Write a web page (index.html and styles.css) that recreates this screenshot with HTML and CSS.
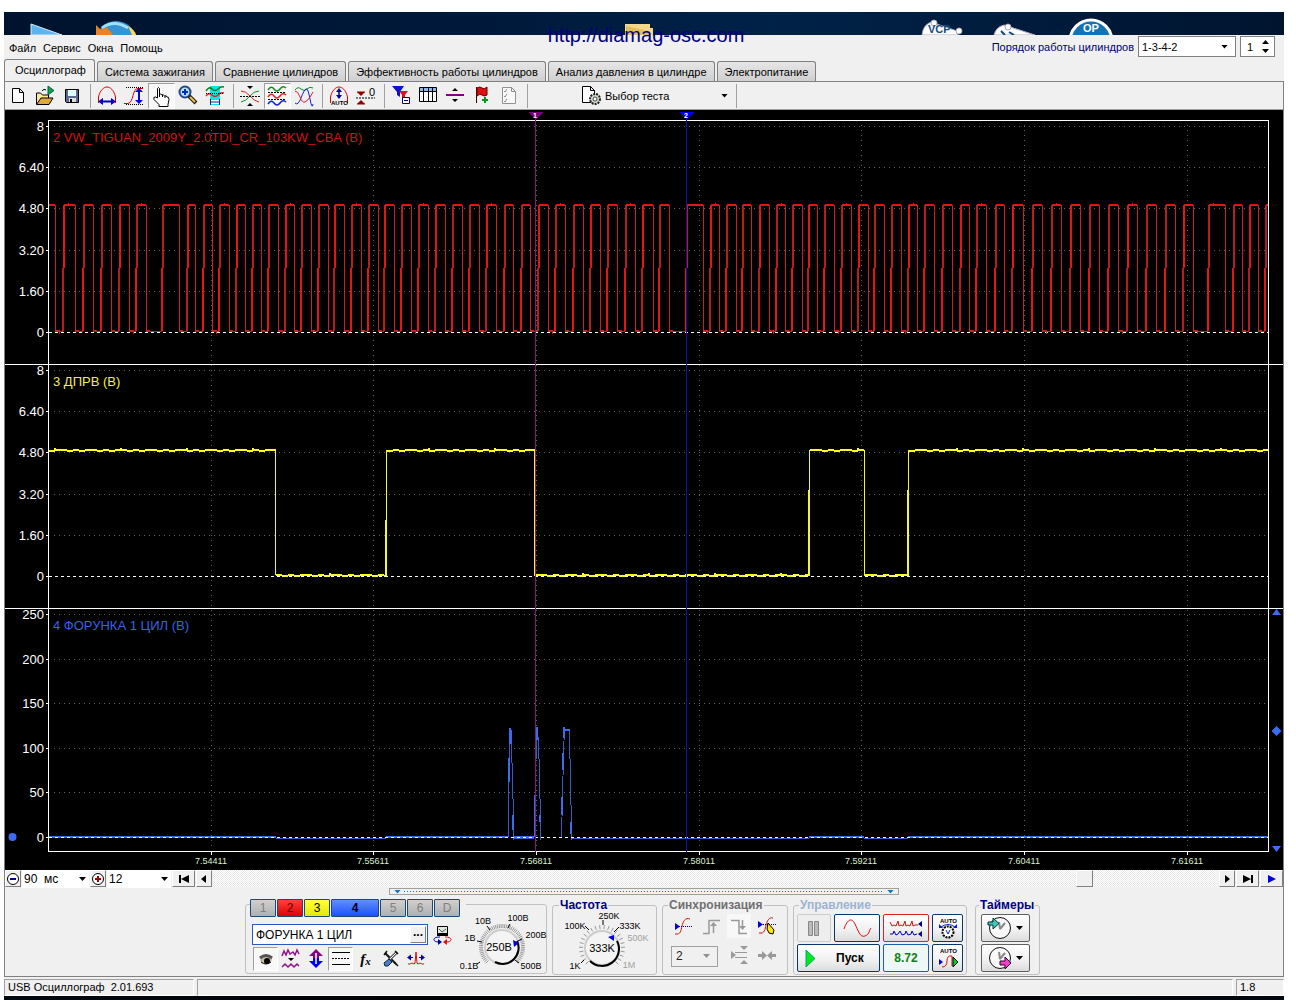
FILE: index.html
```html
<!DOCTYPE html>
<html lang="ru">
<head>
<meta charset="utf-8">
<title>USB Осциллограф</title>
<link rel="stylesheet" href="styles.css">
</head>
<body>
<div class="window">
  <div class="desktop" aria-hidden="true">
    <svg width="86" height="23" viewBox="0 0 86 23">
      <path d="M27 12 58 23H27Z" fill="#5cb4f0" stroke="#d8ecf8"/>
    </svg>
    <svg width="60" height="23" viewBox="86 0 60 23">
      <circle cx="112" cy="29" r="20" fill="#3494d4"/>
      <path d="M98 16q12-9 26 0" fill="none" stroke="#9fe0fa" stroke-width="3"/>
      <path d="M92 23V13l5 5 5-3 4 4 3 4Z" fill="#f08020"/>
      <path d="M124 14q7 4 8 9h-4Z" fill="#ffd860"/>
    </svg>
    <svg class="folder" width="40" height="23" viewBox="0 0 40 23">
      <path d="M5 12h25v4h3v7H5Z" fill="#f2d888"/><path d="M6 14l22 5v4H6Z" fill="#e6bd5c"/>
    </svg>
    <svg class="shortcuts" width="210" height="23" viewBox="0 0 210 23">
      <path d="M14 23q1-10 9-13l26 9 1 4Z" fill="#fff" stroke="#aab" />
      <circle cx="26" cy="11" r="3" fill="#fff" stroke="#aab"/><circle cx="51" cy="19" r="3" fill="#fff" stroke="#aab"/>
      <text x="20" y="21" class="shortcut-text">VCP</text>
      <path d="M86 23q2-8 10-10l31 10Z" fill="#fff" stroke="#aab"/>
      <circle cx="100" cy="15" r="3" fill="#fff" stroke="#aab"/>
      <path d="M93 19l4 4m4-3 5 3" stroke="#124a80" stroke-width="2"/>
      <circle cx="183" cy="29" r="21" fill="#1572b4" stroke="#fff" stroke-width="3"/>
      <text x="175" y="20" class="shortcut-text big">ОР</text>
    </svg>
  </div>
  <header class="menubar">
    <nav class="menu"><a href="#">Файл</a><a href="#">Сервис</a><a href="#">Окна</a><a href="#">Помощь</a></nav>
    <span class="watermark">http://diamag-osc.com</span>
    <div class="order">
      <label for="order">Порядок работы цилиндров</label>
      <span class="combo framed order-combo"><select id="order"><option>1-3-4-2</option></select></span>
      <span class="spin"><input id="first" aria-label="Первый цилиндр" value="1">
        <svg width="9" height="13" viewBox="0 0 9 13"><path d="M1 4h7L4.500 0ZM1 9h7L4.500 13Z"/></svg></span>
    </div>
  </header>
  <div class="tabs" role="tablist">
    <button role="tab" class="tab active" aria-selected="true">Осциллограф</button>
    <button role="tab" class="tab">Система зажигания</button>
    <button role="tab" class="tab">Сравнение цилиндров</button>
    <button role="tab" class="tab">Эффективность работы цилиндров</button>
    <button role="tab" class="tab">Анализ давления в цилиндре</button>
    <button role="tab" class="tab">Электропитание</button>
  </div>
  <main class="page">
    <div class="toolbar">
      <button aria-label="Новый"><svg viewBox="0 0 22 22"><path d="M5.500 3.500h7l4 4v10h-11ZM12.500 3.500v4h4" fill="#fff" stroke="#000"/></svg></button>
      <button aria-label="Открыть"><svg viewBox="0 0 22 22"><path d="M2.500 19V8h4l2 2h6v3" fill="#ffe89a" stroke="#000"/><path d="M2.500 19.500 7 13h12l-4 6.500Z" fill="#e0a83c" stroke="#000"/><path d="M14 1v9l6-4.500Z" fill="#13a04a" stroke="#064"/><path d="M8 6q2-3 4-1" fill="none" stroke="#000"/></svg></button>
      <button aria-label="Сохранить"><svg viewBox="0 0 22 22"><path d="M4.500 4.500h13v13h-12l-1-1Z" fill="#5a6a8c" stroke="#000"/><path d="M7 5h8v6H7Z" fill="#dff"/><path d="M8 13h7v4H8Z" fill="#ddd"/><path d="M9 14h2v3H9Z" fill="#000"/></svg></button>
      <i class="sep"></i>
      <button aria-label="Масштаб по времени"><svg viewBox="0 0 22 22"><path d="M2.500 18V12C4 5 8 2 11 2s7 3 8.500 10v6" fill="none" stroke="#e00000"/><path d="M5 16.500h12" stroke="#0000c0" stroke-width="2"/><path d="M2 16.500 7 13v7ZM20 16.500 15 13v7Z" fill="#0000c0"/></svg></button>
      <button aria-label="Масштаб по амплитуде"><svg viewBox="0 0 22 22"><path d="M1 18.500h4c6-1 4-15 10-15h5" fill="none" stroke="#e00000"/><path d="M3 2.500h17M3 19.500h17" stroke="#000" stroke-dasharray="1 1"/><path d="M16 6v11" stroke="#0000e0" stroke-width="2"/><path d="M16 3l-4 4h8ZM16 19l-4-4h8Z" fill="#0000e0"/></svg></button>
      <button class="pressed" aria-label="Рука"><svg viewBox="0 0 22 22"><path d="M7.500 13V3.500q1-2 2 0V10q1-2 2.500 0 1-1.500 2.500 1 2-1 2.500 1 2-.5 2 2.500l-1 5v2H9v-2l-5-5q-1-3 1.500-2.500Z" fill="#fff" stroke="#000"/><path d="M9.500 10v2m3-2v2m2.500-1v2" stroke="#000"/></svg></button>
      <button aria-label="Лупа"><svg viewBox="0 0 22 22"><circle cx="8" cy="7" r="5.500" fill="#b8dcff" stroke="#234a80" stroke-width="2"/><path d="M5 7h6M8 4v6" stroke="#0030c0" stroke-width="2"/><path d="m12 11 7 7" stroke="#222" stroke-width="4"/><path d="m13 12 5 5" stroke="#f0c040" stroke-width="2"/></svg></button>
      <button aria-label="Выделение"><svg viewBox="0 0 22 22"><path d="M6 1h10v19H6Z" fill="#00e8e8"/><path d="M2 6q3-5 6-2t6 0 6-2" fill="none" stroke="#088020" stroke-width="1.500"/><path d="M2 11q3-4 6-1t6 0 6-2" fill="none" stroke="#e02020" stroke-width="1.500"/><path d="M2 8.500h18" stroke="#000" stroke-dasharray="1 1"/><path d="M7 15h8v4H7Z" fill="#fff"/><path d="M7 17h8M6.500 14v6m9-6v6" stroke="#0020a0"/></svg></button>
      <i class="sep"></i>
      <button aria-label="Совместить"><svg viewBox="0 0 22 22"><path d="M2 6q5 0 9 5t9 6" fill="none" stroke="#e02020"/><path d="M2 17q5-1 9-6t9-5" fill="none" stroke="#089020"/><path d="M1 11.500h20" stroke="#000" stroke-dasharray="2 1"/><path d="M8 1h6l-3 3ZM8 21h6l-3-3Z"/></svg></button>
      <button class="pressed" aria-label="Разделить"><svg viewBox="0 0 22 22"><path d="M2 5q3-5 6-1t6 0 6-1" fill="none" stroke="#089020" stroke-width="1.500"/><path d="M2 12q3-5 6-1t6 0 6-1" fill="none" stroke="#e02020" stroke-width="1.500"/><path d="M2 19q3-5 6-1t6 0 6-1" fill="none" stroke="#1020d0" stroke-width="1.500"/><path d="M2 7.500h18M2 14.500h18" stroke="#000" stroke-dasharray="2 1"/></svg></button>
      <button aria-label="Наложить"><svg viewBox="0 0 22 22"><path d="M2 5q3-4 6-1t6 0 6-1" fill="none" stroke="#089020"/><path d="M2 18q3 3 6-5T13 4t4 10 3 5" fill="none" stroke="#1020d0"/><path d="M2 6q3 0 5 6t5 5 8-10" fill="none" stroke="#e02020"/></svg></button>
      <i class="sep"></i>
      <button aria-label="Автомасштаб"><svg viewBox="0 0 22 22"><path d="M2.500 18V12C4 5 8 2 11 2s7 3 8.500 10v6" fill="none" stroke="#e00000"/><path d="M11 4v9" stroke="#0000a0" stroke-width="1.500"/><path d="M11 3 8 7h6ZM11 14 8 10h6Z" fill="#0000a0"/><text x="3" y="20" class="tiny">AUTO</text></svg></button>
      <button aria-label="Установить ноль"><svg viewBox="0 0 22 22"><path d="M2 7h8l-4 4ZM2 19h8l-4-4Z" fill="#900000"/><path d="M1 13h19" stroke="#000" stroke-dasharray="2 1"/><path d="M2 7h8M2 19h8" stroke="#900000"/><text x="14" y="11" class="zero">0</text></svg></button>
      <i class="sep"></i>
      <button aria-label="Фильтр"><svg viewBox="0 0 22 22"><path d="M2 1h12L10 7v5L7 10V7Z" fill="#1010d0"/><path d="M9 6h9l-3 4v5l-3-2v-3Z" fill="#e01020"/><path d="M12.500 12.500h7v6h-7Z" fill="#fff" stroke="#000080"/><path d="M14 15.500h4" stroke="#000080"/></svg></button>
      <button aria-label="Таблица"><svg viewBox="0 0 22 22"><path d="M2.500 2.500h17v14h-17Z" fill="#fff" stroke="#000"/><path d="M3 3h16v3H3Z" fill="#8ab8e8"/><path d="M2 6.500h18M6.500 3v14M11.500 3v14M15.500 3v14" stroke="#000"/></svg></button>
      <button aria-label="Линейка"><svg viewBox="0 0 22 22"><path d="M2 10h18" stroke="#800080" stroke-width="2"/><path d="M8 6h6l-3-3ZM8 14h6l-3 3Z"/></svg></button>
      <button aria-label="Добавить метку"><svg viewBox="0 0 22 22"><path d="M5.500 2v16" stroke="#400"/><path d="M6 3q3-2 5 0t5-1v8q-3 2-5 0t-5 1Z" fill="#e01010" stroke="#600"/><path d="M11 15h6M14 12v6" stroke="#089020" stroke-width="2"/></svg></button>
      <button aria-label="Список" disabled><svg viewBox="0 0 22 22"><path d="M4.500 2.500h9l4 4v12h-13ZM13.500 2.500v4h4" fill="#f8f8f8" stroke="#909090"/><path d="m6 6 1 1 2-3m-3 7 1 1 2-3m-3 7 1 1 2-3" fill="none" stroke="#909090"/></svg></button>
      <i class="sep"></i>
      <button class="test"><svg viewBox="0 0 22 22"><path d="M2.500 1.500h8l4 4v12h-12ZM10.500 1.500v4h4" fill="#fff" stroke="#000"/><circle cx="15" cy="14" r="5" fill="#cdd8cd" stroke="#222" stroke-width="2" stroke-dasharray="2 1"/><circle cx="15" cy="14" r="2" fill="#fff" stroke="#444"/></svg><span>Выбор теста</span><i class="arrow"></i></button>
      <i class="sep"></i>
    </div>
    <svg class="scope" id="scope" viewBox="5 110 1278 760" role="img" aria-label="Осциллограмма">
      <g id="grid" class="grid"></g>
      <g class="zero-line"><path d="M49 332.500H1268M49 576.500H1268"/></g>
      <g id="traces"></g>
      <path class="zero-line" d="M49 837.500H1268"/>
      <path class="frame" d="M48.500 120.500H1268.500V851.500H48.500ZM5 364.500H1283M5 608.500H1283"/>
      <path class="cursor one" d="M535.500 118V852"/><path class="one-fill" d="M528 112h15l-7 7Z"/><text class="flag" x="535" y="118">1</text>
      <path class="cursor two" d="M686.500 118V852"/><path class="two-fill" d="M679 112h15l-7 7Z"/><text class="flag" x="686" y="118">2</text>
      <g class="handles"><circle cx="12.500" cy="837" r="4"/><path d="M1272 615h9l-4.500-6ZM1272 846h9l-4.500 6ZM1276.500 726l5 5-5 5-5-5Z"/></g>
      <text class="name red" x="53" y="142">2 VW_TIGUAN_2009Y_2.0TDI_CR_103KW_CBA (В)</text>
      <text class="name yellow" x="53" y="386">3 ДПРВ (В)</text>
      <text class="name blue" x="53" y="630">4 ФОРУНКА 1 ЦИЛ (В)</text>
    </svg>
    <div class="scrollrow">
      <button class="raised zoomer" aria-label="Уменьшить"><svg viewBox="0 0 14 14"><circle cx="7" cy="7" r="5.500"/><path d="M4 7h6" stroke="#000090" stroke-width="2"/></svg></button>
      <span class="combo span"><select aria-label="Развёртка"><option>90&nbsp; мс</option></select></span>
      <button class="raised zoomer" aria-label="Увеличить"><svg viewBox="0 0 14 14"><circle cx="7" cy="7" r="5.500"/><path d="M4 7h6M7 4v6" stroke="#a00000" stroke-width="2"/></svg></button>
      <span class="combo span"><select aria-label="Масштаб"><option>12</option></select></span>
      <button class="raised wide" aria-label="В начало"><svg viewBox="0 0 14 14"><path d="M2 3h2v8H2ZM12 3v8L4 7Z"/></svg></button>
      <button class="raised" aria-label="Назад"><svg viewBox="0 0 14 14"><path d="M9 3v8L4 7Z"/></svg></button>
      <input class="track" type="range" min="0" max="1000" value="873" aria-label="Прокрутка">
      <button class="raised" aria-label="Вперёд"><svg viewBox="0 0 14 14"><path d="M5 3v8l5-4Z"/></svg></button>
      <button class="raised wide" aria-label="В конец"><svg viewBox="0 0 14 14"><path d="M10 3h2v8h-2ZM2 3v8l8-4Z"/></svg></button>
      <button class="raised wide" aria-label="Воспроизвести"><svg viewBox="0 0 14 14"><path d="M3 3v8l8-4Z" fill="#0000e0"/></svg></button>
    </div>
    <div class="controls">
      <div class="splitter"><i></i><b></b><i></i></div>
      <div class="groups">
        <div class="group channel">
          <div class="channel-main">
            <div class="channels">
              <button class="ch">1</button><button class="ch c2">2</button><button class="ch c3">3</button><button class="ch c4">4</button><button class="ch">5</button><button class="ch">6</button><button class="ch">D</button>
            </div>
            <div class="name-row">
              <span class="name-box"><input aria-label="Имя канала" value="ФОРУНКА 1 ЦИЛ"><button class="raised" aria-label="Ещё">...</button></span>
              <button class="flat" aria-label="Сброс"><svg viewBox="0 0 20 20"><path d="M5.500 1.500h10v9h-10Z" fill="#dfeadf" stroke="#000"/><path d="M5 8h11v3H5Z"/><path d="m7 4 3 3 4-3" fill="none" stroke="#555"/><path d="M8 12q-6 0-6 2.500t5 2.500" fill="none" stroke="#0000a0"/><path d="M13 12q6 0 6 2.500t-5 2.500" fill="none" stroke="#e01010"/><path d="m6 14 4 3-4 3Z" fill="#0000a0"/><path d="m15 14-4 3 4 3Z" fill="#e01010"/></svg></button>
            </div>
            <div class="icons">
              <button class="pressed" aria-label="Видимость"><svg viewBox="0 0 22 22"><path d="M5 12q6-7 12-1l-1 3q-5 4-10 0Z" fill="#c8b8a0"/><path d="M5 10q6-5 12 0" fill="none" stroke="#555" stroke-width="3"/><circle cx="12" cy="13" r="3"/><path d="M6 14q5 4 10 0" fill="none" stroke="#000"/></svg></button>
              <button aria-label="Сглаживание"><svg viewBox="0 0 22 22"><path d="m2 8 2-5 2 4 2-5 2 4 3-2 2 3 2-5 2 4M2 19l3-3 3 3 3-3 3 3 3-3 2 2" fill="none" stroke="#90108c" stroke-width="1.500"/><path d="M8 10h6l-3 3Z"/></svg></button>
              <button aria-label="Сдвиг"><svg viewBox="0 0 22 22"><path d="m11 1 7 7h-4v4H8V8H4Z" fill="#800880"/><path d="m11 20-7-7h4v-3h6v3h4Z" fill="#0000f0"/><path d="M11 5v11" stroke="#fff" stroke-width="1.500"/></svg></button>
              <button class="pressed" aria-label="Уровни"><svg viewBox="0 0 22 22"><path d="M2 4.500h18M2 16.500h18" stroke="#000"/><path d="M2 10.500h18" stroke="#000" stroke-dasharray="2 1"/></svg></button>
              <button class="fx" aria-label="Функция">f<small>x</small></button>
              <button aria-label="Настройки"><svg viewBox="0 0 22 22"><path d="m5 5 11 11" stroke="#111" stroke-width="2"/><path d="m17 4-8 8" stroke="#555" stroke-width="3"/><path d="m17 4-8 8" stroke="#fff"/><path d="m9 11-5 4 1 3 3 0 4-4Z" fill="#4a80c0" stroke="#124"/><path d="m15 15 3 3M4 7l3-4M15 3l3 3" stroke="#111" stroke-width="1.500"/></svg></button>
              <button aria-label="Сжатие"><svg viewBox="0 0 22 22"><path d="M3 16h2l2-1 2 1 1-1 1-11 1 11 1 1 2-1 2 1h2" fill="none" stroke="#e01010"/><path d="M3 9.500h5M14 9.500h5" stroke="#0000a0"/><path d="m2 9.500 4-3v6ZM20 9.500l-4-3v6Z" fill="#0000a0"/></svg></button>
            </div>
          </div>
          <svg class="knob" width="90" height="68" viewBox="0 0 90 68" data-cx="42" data-cy="42" data-ticks="55" data-inner="18">
            <g class="ticks"></g><circle class="dial" cx="42" cy="42" r="17"/>
            <path class="shade" d="M57 36A16 16 0 0 1 35 57"/>
            <path class="major" d="m22 37-5-1m13-11-3-4m21 2 2-4m8 17 4-2m-42 23-3 2m38-4 4 3"/>
            <path class="pointer" d="m53 35 6 3-5 4Z"/>
            <text x="23" y="19">10В</text><text x="58" y="16">100В</text><text x="10" y="36">1В</text><text x="76" y="33">200В</text><text x="9" y="64">0.1В</text><text x="71" y="64">500В</text>
            <text class="value" x="39" y="46">250В</text>
          </svg>
        </div>
        <fieldset class="group freq"><legend>Частота</legend>
          <svg class="knob" width="103" height="61" viewBox="0 4 103 61" data-cx="49" data-cy="41" data-ticks="23" data-inner="18">
            <g class="ticks"></g><circle class="dial" cx="49" cy="41" r="17"/>
            <path class="shade" d="M64 34A17 17 0 0 1 37 54"/>
            <path class="major" d="m36 23-4-4m18-1v-5m11 12 5-5m-35 33-3 3"/>
            <path class="pointer" d="m55 30 6-2v6Z"/>
            <text x="56" y="12">250K</text><text x="22" y="22">100K</text><text x="77" y="22">333K</text><text class="off" x="85" y="34">500K</text><text x="22" y="62">1K</text><text class="off" x="76" y="61">1M</text>
            <text class="value" x="49" y="45">333K</text>
          </svg>
        </fieldset>
        <fieldset class="group sync"><legend>Синхронизация</legend>
          <button aria-label="Уровень"><svg viewBox="0 0 22 22"><path d="M3 19c6 1 6-4 7-8s3-9 8-7" fill="none" stroke="#d01010"/><path d="M3 11.500h17" stroke="#000080" stroke-dasharray="1 1"/><path d="M3 8v7l5-3.500Z" fill="#0000d0"/></svg></button>
          <button aria-label="Фронт" disabled><svg viewBox="0 0 22 22"><path d="M3 18.500h6v-13h11M13.500 18V9" fill="none" stroke="#999" stroke-width="1.500"/><path d="M10 11h7l-3.500-4Z" fill="#999"/></svg></button>
          <button aria-label="Спад" disabled class="pressed"><svg viewBox="0 0 22 22"><path d="M3 5.500h8v13h8M14.500 5v8" fill="none" stroke="#999" stroke-width="1.500"/><path d="M11 11h7l-3.500 4Z" fill="#999"/></svg></button>
          <button aria-label="Выбор уровня"><svg viewBox="0 0 22 22"><path d="M3 18c6 1 6-4 7-8s3-8 7-7" fill="none" stroke="#d01010"/><path d="M3 9.500h17" stroke="#000080" stroke-dasharray="1 1"/><path d="M2 6v7l5-3.500Z" fill="#0000d0"/><path d="m12 8 6 7-1 4-4-1-2-4Z" fill="#ffe800" stroke="#000"/></svg></button>
          <span class="combo framed disabled"><select aria-label="Канал синхронизации" disabled><option>2</option></select></span>
          <button aria-label="Гистерезис" disabled><svg viewBox="0 0 22 22"><path d="M3 6v8l5-4ZM12 1h8l-4 4ZM12 19h8l-4-4Z" fill="#999"/><path d="M7 7.500h12M7 12.500h12" stroke="#999"/></svg></button>
          <button aria-label="Центр" disabled><svg viewBox="0 0 22 22"><path d="M2 9h4V6l5 4.500L6 15v-3H2ZM20 9h-4V6l-5 4.500 5 4.500v-3h4Z" fill="#999"/></svg></button>
        </fieldset>
        <fieldset class="group run"><legend>Управление</legend>
          <button class="push idle" aria-label="Пауза" disabled><svg viewBox="0 0 24 24"><path d="M6.500 5.500h4v14h-4ZM12.500 5.500h4v14h-4Z" fill="#bbb" stroke="#888"/></svg></button>
          <button class="push" aria-label="Синус"><svg class="w" viewBox="0 0 40 24"><path d="M7 13C11 2 15 2 18 8s5 14 10 12 4-6 6-8" fill="none" stroke="#d01010"/></svg></button>
          <button class="push hot" aria-label="Два луча"><svg class="w" viewBox="0 0 40 24"><path d="m4 6 2 4 2-1 2 1 2-5 1 5 2-1 2 1 2-5 1 5 2-1 2 1 2-5 1 5 2-1 3 0" fill="none" stroke="#d01010"/><path d="m4 18 3 0 1-3 2 4 2-1 2-3 2 4 3-1 1-3 2 4 3-1 1-3 2 4 3-1" fill="none" stroke="#0000c0"/><path d="M36 5v6l-4-3ZM36 15v6l-4-3Z" fill="#000080"/></svg></button>
          <button class="push" aria-label="Авто шкала"><svg viewBox="0 0 24 24"><text x="4" y="7" class="tiny">AUTO</text><circle cx="12" cy="16" r="5.500" fill="#fff" stroke="#000" stroke-width="2" stroke-dasharray="2 1"/><path d="m10 14 2 4 2-4" fill="none" stroke="#0020d0"/><path d="M5 11q7-5 14 0" fill="none" stroke="#0020d0"/><path d="M3 8v4h4ZM21 8v4h-4Z" fill="#0020d0"/></svg></button>
          <button class="push start"><svg viewBox="0 0 24 24"><path d="M8 4v17l9-8.500Z" fill="#00e820" stroke="#0a6"/></svg>Пуск</button>
          <button class="push rate">8.72</button>
          <button class="push" aria-label="Авто пуск"><svg viewBox="0 0 24 24"><text x="4" y="7" class="tiny">AUTO</text><path d="M6 21q5 0 5-6t5-5v10" fill="none" stroke="#d01010"/><path d="M3 13v6l4-3Z" fill="#0000e0"/><path d="M17 11v10l5-5Z" fill="#00d020" stroke="#000"/></svg></button>
        </fieldset>
        <fieldset class="group timers"><legend>Таймеры</legend>
          <button class="push gray" aria-label="Таймер пуска"><svg viewBox="0 0 24 24"><circle cx="13" cy="12" r="10.500" fill="#f8f8f8" stroke="#111"/><path d="m13 13 5-6m-5 6-1-7" stroke="#888" stroke-width="2"/><path d="M1 6h5V2l6 5.500L6 13V9H1Z" fill="#40c8b8" stroke="#033"/></svg><i class="arrow"></i></button>
          <button class="push gray" aria-label="Таймер остановки"><svg viewBox="0 0 24 24"><circle cx="13" cy="12" r="10.500" fill="#f8f8f8" stroke="#111"/><path d="m13 13 5-6m-5 6-1-7" stroke="#888" stroke-width="2"/><path d="M13 15h5v-4l6 6-6 6v-4h-5Z" fill="#f040c8" stroke="#303"/></svg><i class="arrow"></i></button>
        </fieldset>
      </div>
    </div>
  </main>
  <footer class="status"><span class="cell version">USB Осциллограф&nbsp; 2.01.693</span><span class="cell fill"></span><span class="cell last">1.8</span></footer>
  <div class="taskbar"></div>
</div>
<script src="scope.js"></script>
</body>
</html>
```
FILE: styles.css
```css
* { box-sizing: border-box; }
body { margin: 0; background: #fff; font: 11px/14px "Liberation Sans", Arial, sans-serif; color: #000; }
button, input, select { font: inherit; color: inherit; margin: 0; padding: 0; border: 0; background: none; border-radius: 0; outline: 0; }
button { display: flex; align-items: center; justify-content: center; }
select { appearance: none; width: 100%; }
svg { display: block; flex: none; }
.window { position: relative; margin: 12px 12px 0 4px; background: #f0f0f0; }

.desktop { display: flex; height: 23px; overflow: hidden; background: linear-gradient(90deg, #00132e, #001a3c 40%, #002248 60%, #00142f); }
.desktop .folder { margin-left: 470px; }
.desktop .shortcuts { margin-left: auto; margin-right: 166px; }
.shortcut-text { font: bold 11px "Liberation Sans", sans-serif; fill: #124a80; }
.shortcut-text.big { fill: #fff; }

.menubar { display: flex; justify-content: space-between; height: 24px; }
.menu { display: flex; gap: 7px; padding: 6px 5px; }
.menu a { color: #000; text-decoration: none; }
.watermark { position: absolute; top: 12px; left: 4px; right: 0; width: max-content; margin: 0 auto; font-size: 20px; line-height: 23px; color: #000080; }
.order { display: flex; gap: 4px; padding: 1px 9px 0 0; }
.order label { color: #000070; line-height: 23px; }
.combo { display: grid; grid-template-columns: 1fr 8px; align-items: center; padding-right: 6px; background: #fff; }
.combo::after, .arrow { content: ""; width: 7px; height: 4px; background: #000; clip-path: polygon(0 0, 100% 0, 50% 100%); }
.framed { border: 1px solid #808080; }
.order-combo { width: 98px; height: 21px; padding-left: 3px; }
.spin { display: flex; align-items: center; width: 35px; height: 21px; padding: 0 6px; border: 1px solid #808080; background: #fff; }
.spin input { width: 14px; }

.tabs { display: flex; align-items: flex-end; gap: 2px; height: 22px; }
.tab { height: 20px; padding: 0 7px; border: 1px solid #808080; border-bottom: 0; border-radius: 3px 3px 0 0; background: linear-gradient(#e6e6e6, #cfcfcf); white-space: nowrap; }
.tab.active { height: 22px; padding: 0 8px 2px 10px; background: #f0f0f0; }

.page { border: 1px solid #808080; }
.toolbar { display: flex; align-items: center; height: 28px; border-bottom: 1px solid #a0a0a0; }
.toolbar button { width: 27px; height: 26px; padding-right: 1px; }
.toolbar svg { width: 22px; height: 22px; }
.sep { width: 8px; height: 24px; background: linear-gradient(#a0a0a0, #a0a0a0) 4px 0 / 1px 100% no-repeat; }
.pressed { border: 1px solid; border-color: #a0a0a0 #fff #fff #a0a0a0; background: #f8f8f8; }
.toolbar .test { width: 152px; margin-left: 49px; padding-right: 4px; gap: 3px; justify-content: flex-start; }
.test span { flex: 1; text-align: left; }
.tiny { font: bold 6px "Liberation Sans", sans-serif; }
.zero { font: 11px "Liberation Sans", sans-serif; }

.scope { width: 100%; background: #000; shape-rendering: crispEdges; }
.grid { stroke: #606060; stroke-dasharray: 1 4; }
.grid path { fill: none; }
.grid .tick { stroke: #fff; stroke-dasharray: none; }
.grid text { stroke: none; font: 13px "Liberation Sans", sans-serif; fill: #fff; text-anchor: end; }
.grid .time { font-size: 9px; fill: #d8f0d0; text-anchor: middle; }
.zero-line { stroke: #fff; stroke-dasharray: 3 3; fill: none; }
.frame { fill: none; stroke: #fff; }
.red-high { stroke: #e81414; stroke-width: 2; fill: none; }
.red-dim { stroke: #b81c1c; stroke-width: 2; fill: none; }
.red-fall { stroke: #cc2020; fill: none; }
.yellow-trace { stroke: #f4f43a; fill: none; }
.yellow-level { stroke: #ffff20; stroke-width: 2; fill: none; }
.blue-trace { stroke: #3a6cf0; stroke-width: 2; fill: none; }
.blue-low { stroke: #3a5cc0; fill: none; }
.cursor.one { stroke: #801880; }
.cursor.two { stroke: #1010b0; }
.one-fill { fill: #800080; }
.two-fill { fill: #0000f0; }
.flag { font: bold 7px "Liberation Sans", sans-serif; fill: #fff; text-anchor: middle; }
.handles { fill: #3a6cf8; shape-rendering: auto; }
.name { font: 13px "Liberation Sans", sans-serif; }
.name.red { fill: #d01414; }
.name.yellow { fill: #f0f050; }
.name.blue { fill: #3a62e8; }

.scrollrow { display: flex; height: 18px; gap: 1px; background: #f0f0f0; }
.raised { width: 16px; height: 17px; border: 1px solid; border-color: #fff #808080 #808080 #fff; background: #f0f0f0; }
.raised svg { width: 14px; height: 14px; }
.raised.wide { width: 23px; }
.zoomer circle { fill: #fff; stroke: #000; }
.combo.span { width: 67px; font-size: 12px; padding: 0 2px 0 2px; }
.combo.span:nth-of-type(2) { width: 64px; }
.track { appearance: none; flex: 1; min-width: 60px; height: 17px; background: repeating-conic-gradient(#e8e8e8 0 25%, #fff 0 50%) 0 0 / 2px 2px; }
.track::-webkit-slider-thumb { appearance: none; width: 17px; height: 17px; border: 1px solid; border-color: #fff #808080 #808080 #fff; background: #f0f0f0; }

.controls { padding-bottom: 1px; }
.splitter { display: flex; align-items: center; justify-content: space-between; width: 510px; height: 7px; margin: 0 auto 4px; padding: 0 4px; border: 1px solid #a0a0a0; }
.splitter i { width: 7px; height: 4px; background: #0878c8; clip-path: polygon(0 0, 100% 0, 50% 100%); }
.splitter b { flex: 1; margin: 0 3px; height: 1px; background: repeating-linear-gradient(90deg, #0878c8 0 1px, transparent 1px 3px); }
.groups { display: flex; justify-content: center; gap: 5px; padding-right: 3px; }
.group { min-width: 0; margin: 0; padding: 0; border: 1px solid #c0c0c0; border-radius: 3px; }
.group legend { margin-left: 6px; padding: 0 1px; font-size: 12px; font-weight: bold; line-height: 12px; color: #000080; }
.channel { display: flex; width: 302px; height: 70px; margin-top: 5px; padding-left: 4px; }
.channel-main { width: 210px; margin-top: -6px; }
.channels { display: flex; gap: 1px; width: 216px; background: #f0f0f0; }
.ch { width: 26px; height: 18px; border: 1px solid #1a4a7c; border-radius: 1px; background: linear-gradient(#d0d0d0, #b0b0b0); color: #808080; font-size: 12px; }
.ch.c2 { background: linear-gradient(#ff4040, #e00000); color: #500; }
.ch.c3 { background: linear-gradient(#ffff40, #e8e800); color: #000; }
.ch.c4 { width: 48px; background: linear-gradient(#6090ff, #1c50ff); color: #000; font-weight: bold; }
.name-row { display: flex; align-items: center; gap: 4px; margin: 7px 0 2px 2px; }
.name-box { display: flex; align-items: center; width: 176px; height: 21px; padding: 0 1px 0 3px; border: 1px solid #2858c8; background: #fff; font-size: 12px; }
.name-box input { flex: 1; min-width: 0; }
.name-box .raised { font-weight: bold; line-height: 8px; padding-bottom: 5px; }
.flat { flex: none; }
.flat svg { width: 20px; height: 20px; }
.icons { display: flex; margin-left: 3px; }
.icons button { width: 25px; height: 24px; }
.icons svg, .sync svg { width: 22px; height: 22px; }
.icons .fx { font: italic bold 15px "Liberation Serif", serif; }
.fx small { font-size: 11px; padding-top: 4px; }

.knob { font: 9px "Liberation Sans", sans-serif; text-anchor: middle; }
.knob .value { font-size: 11px; }
.knob .off { fill: #a0a0a0; }
.knob .ticks { stroke: #999; }
.knob .major { stroke: #000; fill: none; }
.dial { fill: #f4f4f4; stroke: #ccc; stroke-width: 2; }
.shade { fill: none; stroke: #000; stroke-width: 2; }
.pointer { fill: #0000d0; }
.freq { width: 105px; }

.sync { display: grid; grid-template-columns: repeat(4, 24px); grid-auto-rows: 26px; column-gap: 4px; row-gap: 4px; width: 126px; padding: 2px 8px 0; align-items: center; }
.sync button { width: 24px; height: 24px; }
.sync .pressed { border: 0; }
.sync .combo { grid-column: span 2; width: 47px; height: 21px; padding-left: 4px; font-size: 12px; background: #f0f0f0; border-color: #a0a0a0; }
.sync .combo::after { background: #909090; }
.sync select { opacity: 1; color: #222; }
.group.sync legend { margin-left: -3px; color: #707070; }
.run { display: grid; grid-template-columns: 34px 46px 46px 31px; grid-auto-rows: 28px; gap: 2px 3px; width: 174px; padding: 3px 3px 2px; }
.group.run legend { margin-left: 2px; color: #9cb4d0; }
.push { border: 1px solid #083868; border-radius: 2px; background: linear-gradient(#fff, #f0f0f0 60%, #dcdcdc); }
.push svg { width: 24px; height: 24px; }
.push .w { width: 40px; height: 24px; }
.push.idle { border-color: #ccc; background: #eee; }
.push.hot { border-color: #e02020; }
.push.start { grid-column: span 2; justify-content: flex-start; gap: 14px; font-weight: bold; font-size: 12px; }
.push.rate { border-color: #1860a8; background: #eef6f8; color: #108010; font-weight: bold; font-size: 12px; }
.timers { display: grid; grid-auto-rows: 28px; gap: 2px; width: 65px; margin-left: 3px; padding: 3px 9px 2px 5px; }
.group.timers legend { margin-left: -2px; }
.push.gray { border-color: #606060; justify-content: space-between; padding: 0 6px 0 5px; }

.status { display: flex; gap: 3px; height: 19px; padding-top: 2px; }
.cell { height: 17px; padding: 0 3px; border: 1px solid; border-color: #a0a0a0 #fff #fff #a0a0a0; line-height: 15px; }
.cell.version { width: 190px; }
.cell.fill { flex: 1; }
.cell.last { width: 48px; }
.taskbar { height: 4px; background: linear-gradient(90deg, #000810, #000 50%, #000810); }
```
FILE: scope.js
```js
const NS = 'http://www.w3.org/2000/svg';

function add(parent, tag, attrs, text) {
  const node = document.createElementNS(NS, tag);
  for (const key in attrs) node.setAttribute(key, attrs[key]);
  if (text !== undefined) node.textContent = text;
  parent.appendChild(node);
  return node;
}

/* Grid, scales and labels */
const grid = document.getElementById('grid');
const times = { 211: '7.54411', 373: '7.55611', 536: '7.56811', 699: '7.58011', 861: '7.59211', 1024: '7.60411', 1187: '7.61611' };
for (const x in times) {
  const c = Number(x) + 0.5;
  add(grid, 'path', { d: `M${c} 125V850` });
  add(grid, 'path', { class: 'tick', d: `M${c} 851v4` });
  add(grid, 'text', { class: 'time', x, y: 864 }, times[x]);
}
const levels = [
  [126, '8'], [167, '6.40'], [208, '4.80'], [250, '3.20'], [291, '1.60'], [332, '0'],
  [370, '8'], [411, '6.40'], [452, '4.80'], [494, '3.20'], [535, '1.60'], [576, '0'],
  [614, '250'], [659, '200'], [703, '150'], [748, '100'], [792, '50'], [837, '0']
];
for (const [y, label] of levels) {
  if (label !== '0') add(grid, 'path', { d: `M54 ${y + 0.5}H1266` });
  add(grid, 'path', { class: 'tick', d: `M46 ${y + 0.5}h3` });
  add(grid, 'text', { x: 44, y: y + 5 }, label);
}

/* Crankshaft signal: moments where the level falls and rises */
const falls = [55, 75, 93, 111, 129, 146, 179, 195, 212, 229, 245, 261, 278, 294, 311, 328, 344, 361, 378, 394, 411, 428, 445, 462, 479, 496, 513, 530, 548, 565, 583, 600, 617, 635, 653, 669, 703, 719, 736, 751, 769, 785, 802, 817, 834, 851, 868, 884, 901, 917, 934, 952, 969, 986, 1004, 1023, 1042, 1061, 1080, 1099, 1118, 1137, 1156, 1175, 1193, 1225, 1242, 1258];
const rises = [64, 84, 102, 120, 137, 163, 188, 204, 220, 237, 253, 269, 286, 302, 319, 335, 352, 369, 385, 402, 419, 436, 453, 470, 487, 505, 522, 539, 556, 574, 591, 608, 626, 643, 660, 687, 711, 727, 743, 760, 777, 793, 809, 825, 842, 859, 875, 892, 909, 925, 943, 961, 977, 996, 1013, 1033, 1052, 1071, 1090, 1109, 1128, 1147, 1166, 1184, 1209, 1234, 1250, 1266];
const traces = document.getElementById('traces');
let high = 'M49 205H55', dim = '', thin = '';
falls.forEach((x, i) => {
  const up = rises[i], next = falls[i + 1] || 1268;
  const lower = `M${up - 1} 331V268`, upper = `M${up} 268V205`;
  thin += `M${x + 0.5} 205V331M${x} 331.500H${up - 1}M${x} 330.500h4`;
  if (i % 3) { high += lower; dim += upper; }
  else { high += upper; dim += lower; }
  high += `M${up} 205H${next}`;
  if (i % 4 === 0) thin += `M${up + 4.5} 203v3M${x + 4.5} 330v4`;
});
add(traces, 'path', { class: 'red-fall', d: thin });
add(traces, 'path', { class: 'red-dim', d: dim });
add(traces, 'path', { class: 'red-high', d: high });

/* Camshaft signal */
add(traces, 'path', { class: 'yellow-trace', d: 'M275.500 450V575M385.500 576V520M386.500 576V450M534.500 450V576M808.500 576V490M809.500 576V450M864.500 450V576M907.500 576V490M908.500 576V450' });
let level = '';
for (const [from, to, y] of [[49, 276, 450], [276, 386, 575], [387, 535, 450], [535, 809, 575], [810, 865, 450], [865, 908, 575], [909, 1268, 450]]) {
  for (let x = from; x < to; x += 6) {
    const end = Math.min(x + 6, to);
    level += `M${x} ${y + (x * 7 % 5 > 2 ? 1 : 0)}H${end}`;
    if (x % 11 === 0) level += `M${x} ${y - 2}v3`;
  }
}
add(traces, 'path', { class: 'yellow-level', d: level });

/* Injector signal */
add(traces, 'path', { class: 'blue-low', d: 'M276 838.500H386M514 838.500H534M572 838.500H809M864 838.500H908' });
add(traces, 'path', { class: 'blue-low', d: 'M508.500 837V798L509.500 750 510.500 728 511.500 742 512.500 782 513.500 815V840M534.500 837 535.500 794 536.500 727 538.500 740 539.500 777 540.500 820V840M561.500 837 562.500 797 563.500 755 564.500 727V730H569.500L570.500 787 571.500 822V840' });
add(traces, 'path', { class: 'blue-trace', d: 'M49 837H276M386 837H508M514 837H534M809 837H864M908 837H1268M509 782V758M510 743V728M511 744V730M513 830V815M535 837V795M537 740V727M540 822V815M562 815V797M563 770V753M564 738V727M564 730H570M571 834V822' });

/* Scale marks round the knobs */
for (const knob of document.querySelectorAll('.knob')) {
  const { cx, cy, ticks, inner } = knob.dataset;
  const n = Number(ticks);
  let d = '';
  for (let i = 0; i <= n; i++) {
    const a = (135 + 270 * i / n) * Math.PI / 180;
    const p = r => `${(Number(cx) + r * Math.cos(a)).toFixed(1)} ${(Number(cy) + r * Math.sin(a)).toFixed(1)}`;
    d += `M${p(Number(inner) + 1)}L${p(Number(inner) + 5)}`;
  }
  add(knob.querySelector('.ticks'), 'path', { d });
}
```
